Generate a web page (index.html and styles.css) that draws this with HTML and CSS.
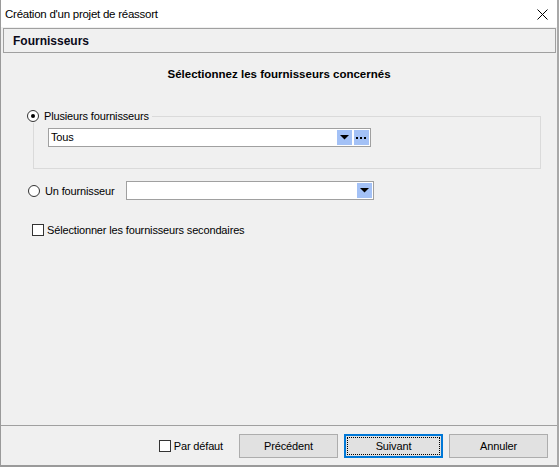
FILE: index.html
```html
<!DOCTYPE html>
<html lang="fr">
<head>
<meta charset="utf-8">
<title>Création d'un projet de réassort</title>
<link rel="stylesheet" href="styles.css">
</head>
<body>
<div class="window">
  <div class="titlebar">
    <span class="title">Création d'un projet de réassort</span>
    <svg class="close" width="11" height="11" viewBox="0 0 11 11"><path d="M0.5 0.5 L10.5 10.5 M10.5 0.5 L0.5 10.5" stroke="#000" stroke-width="1" fill="none"/></svg>
  </div>
  <div class="header">Fournisseurs</div>
  <div class="content">
    <div class="heading">Sélectionnez les fournisseurs concernés</div>
    <div class="group">
      <div class="legend">
        <span class="radio checked"></span>
        <span class="label">Plusieurs fournisseurs</span>
      </div>
      <div class="combo combo-all">
        <span class="combo-text">Tous</span>
        <span class="combo-btn"><svg width="9" height="5" viewBox="0 0 9 5"><polygon points="0,0 9,0 4.5,4.5" fill="#000"/></svg></span>
        <span class="combo-btn dots"><svg width="11" height="3" viewBox="0 0 11 3"><rect x="0" y="0" width="2" height="2"/><rect x="4" y="0" width="2" height="2"/><rect x="8" y="0" width="2" height="2"/></svg></span>
      </div>
    </div>
    <div class="row single">
      <div class="radio-label">
        <span class="radio"></span>
        <span class="label">Un fournisseur</span>
      </div>
      <div class="combo combo-one">
        <span class="combo-text"></span>
        <span class="combo-btn"><svg width="9" height="5" viewBox="0 0 9 5"><polygon points="0,0 9,0 4.5,4.5" fill="#000"/></svg></span>
      </div>
    </div>
    <div class="row check-row">
      <span class="checkbox"></span>
      <span class="label">Sélectionner les fournisseurs secondaires</span>
    </div>
  </div>
  <div class="footer">
    <div class="default-check">
      <span class="checkbox"></span>
      <span class="label">Par défaut</span>
    </div>
    <div class="btn">Précédent</div>
    <div class="btn focused"><span class="focus-ring">Suivant</span></div>
    <div class="btn">Annuler</div>
  </div>
</div>
</body>
</html>
```
FILE: styles.css
```css
html, body {
  margin: 0;
  padding: 0;
  background: #f0f0f0;
}
body {
  font-family: "Liberation Sans", Arial, sans-serif;
  font-size: 11px;
  letter-spacing: -0.15px;
  color: #000;
}
.window {
  width: 559px;
  height: 467px;
  box-sizing: border-box;
  border-left: 1px solid #9a9a9a;
  border-right: 2px solid #a8a8a8;
  border-bottom: 2px solid #9a9a9a;
  background: #f0f0f0;
  display: flex;
  flex-direction: column;
}
.titlebar {
  height: 27px;
  flex: none;
  background: #fff;
  display: flex;
  align-items: center;
  justify-content: space-between;
  padding-left: 4px;
  padding-right: 9px;
}
.title {
  font-size: 11.5px;
  letter-spacing: -0.25px;
}
.close {
  display: block;
  margin-top: 1px;
}
.header {
  flex: none;
  height: 23px;
  margin: 1px 1px 0 2px;
  border: 1px solid #a0a0a0;
  background: #f0f0f0;
  padding-left: 9px;
  display: flex;
  align-items: center;
  font-weight: bold;
  font-size: 12px;
  letter-spacing: 0;
  color: #0a0a1a;
}
.content {
  flex: 1;
  border-bottom: 1px solid #a0a0a0;
  padding-top: 13px;
  display: flex;
  flex-direction: column;
  align-items: flex-start;
}
.heading {
  align-self: stretch;
  text-align: center;
  font-weight: bold;
  font-size: 11.5px;
  letter-spacing: 0;
  line-height: 16px;
}
.group {
  position: relative;
  margin-top: 34px;
  margin-left: 32px;
  width: 506px;
  height: 51px;
  border: 1px solid #dadada;
}
.legend {
  position: absolute;
  top: -8px;
  left: -7px;
  display: flex;
  align-items: center;
  gap: 5px;
  padding-right: 3px;
  background: #f0f0f0;
  line-height: 14px;
}
.radio {
  width: 10px;
  height: 10px;
  border: 1px solid #333;
  border-radius: 50%;
  background: #fff;
  display: inline-flex;
  align-items: center;
  justify-content: center;
  flex: none;
}
.radio.checked::after {
  content: "";
  width: 4px;
  height: 4px;
  border-radius: 50%;
  background: #000;
}
.combo {
  box-sizing: border-box;
  height: 19px;
  border: 1px solid #a0a0a0;
  background: #fff;
  display: flex;
  align-items: center;
  padding: 1px;
  gap: 2px;
}
.combo-all {
  margin-top: 11px;
  margin-left: 14px;
  width: 323px;
}
.combo-text {
  flex: 1;
  padding-left: 1px;
  line-height: 15px;
}
.combo-btn {
  width: 15px;
  height: 15px;
  background: #a3c1f6;
  display: flex;
  align-items: center;
  justify-content: center;
}
.combo-btn svg {
  display: block;
}
.dots svg {
  fill: #000;
  margin-top: 1px;
}
.row {
  display: flex;
  align-items: center;
  margin-left: 27px;
}
.single {
  margin-top: 12px;
}
.radio-label {
  width: 98px;
  display: flex;
  align-items: center;
  gap: 5px;
}
.combo-one {
  width: 248px;
}
.check-row {
  margin-top: 22px;
  margin-left: 31px;
  gap: 3px;
  line-height: 16px;
}
.checkbox {
  box-sizing: border-box;
  width: 12px;
  height: 12px;
  border: 1px solid #333;
  background: #fff;
  flex: none;
}
.footer {
  flex: none;
  height: 39px;
  display: flex;
  align-items: flex-start;
  justify-content: flex-end;
  padding-top: 8px;
  padding-right: 9px;
  box-sizing: border-box;
  gap: 6px;
}
.default-check {
  display: flex;
  align-items: center;
  gap: 3px;
  height: 24px;
  margin-right: 10px;
}
.btn {
  box-sizing: border-box;
  width: 99px;
  height: 24px;
  border: 1px solid #adadad;
  background: #e1e1e1;
  display: flex;
  align-items: center;
  justify-content: center;
}
.btn.focused {
  border: 2px solid #0078d7;
  padding: 1px;
}
.focus-ring {
  box-sizing: border-box;
  width: 100%;
  height: 100%;
  border: 1px dotted #000;
  display: flex;
  align-items: center;
  justify-content: center;
}
```
